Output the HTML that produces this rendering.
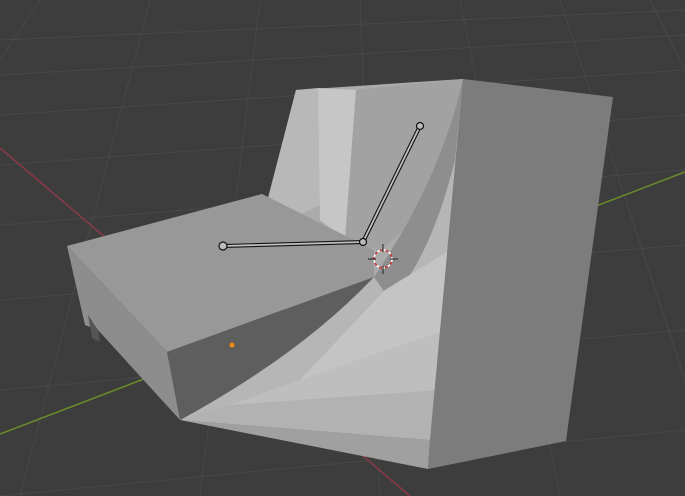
<!DOCTYPE html><html><head><style>html,body{margin:0;padding:0;background:#3d3d3d;overflow:hidden}svg{display:block}</style></head><body>
<svg width="685" height="496" viewBox="0 0 685 496" xmlns="http://www.w3.org/2000/svg">
<rect width="685" height="496" fill="#3d3d3d"/>
<g stroke="#484848" stroke-width="1" fill="none">
<path d="M0 40 L685 10 M0 75 L685 35 M0 115 L685 70 M0 165 L685 115 M0 225 L685 170 M0 300 L685 245 M0 390 L685 330 M0 496 L685 430"/>
<path d="M40 0 L0 60 M150 0 L20 496 M260 0 L200 496 M360 0 L380 496 M460 0 L560 496 M560 0 L685 380 M650 0 L685 70"/>
</g>
<line x1="0" y1="148" x2="410" y2="496" stroke="#8a3a46" stroke-width="1.5"/>
<line x1="0" y1="434" x2="685" y2="172" stroke="#6a8f2a" stroke-width="1.5"/>
<polygon points="296,90 463,79 430,440 300,400 267,202" fill="#ababab"/>
<polygon points="296,90 318,88 330,200 300,215 267,202" fill="#b8b8b8"/>
<polygon points="318,88 356,90 345,240 320,220" fill="#c6c6c6"/>
<polygon points="356,90 463,79 440,200 380,250 345,240" fill="#a2a2a2"/>
<path d="M374,277 Q440,180 463,79 L430,440 L180,420 Q290,360 374,277 Z" fill="#b6b6b6"/>
<path d="M374,277 Q440,180 463,79 L455,160 Q430,260 390,300 Z" fill="#8e8e8e"/>
<path d="M385,290 L450,250 L445,330 L300,380 Z" fill="#c4c4c4"/>
<path d="M300,380 L445,330 L440,390 L230,405 Z" fill="#bebebe"/>
<path d="M230,405 L440,390 L430,440 L180,420 Z" fill="#b2b2b2"/>
<polygon points="67,246 262,194 374,250 374,277 167,352" fill="#989898"/>
<path d="M167,352 L374,277 Q300,355 180,420 Z" fill="#5e5e5e"/>
<polygon points="67,246 167,352 180,420 98,330 85,325" fill="#8d8d8d"/>
<polygon points="88,315 98,330 100,342 92,338" fill="#555"/>
<polygon points="463,79 613,97 566,441 428,469 430,440" fill="#7c7c7c"/>
<polygon points="180,420 430,440 428,469" fill="#a0a0a0"/>
<g stroke="#111" stroke-width="4" fill="none" stroke-linecap="round"><path d="M223,246 L363,242 L420,126"/></g>
<g stroke="#c0c0c0" stroke-width="1.8" fill="none" stroke-linecap="round"><path d="M223,246 L363,242 L420,126"/></g>
<circle cx="223" cy="246" r="4" fill="#bbb" stroke="#111" stroke-width="1.2"/>
<circle cx="363" cy="242" r="3.5" fill="#bbb" stroke="#111" stroke-width="1.2"/>
<circle cx="420" cy="126" r="3.5" fill="#bbb" stroke="#111" stroke-width="1.2"/>
<circle cx="383" cy="259" r="9" fill="none" stroke="#fff" stroke-width="1.5" stroke-dasharray="3 3"/>
<circle cx="383" cy="259" r="9" fill="none" stroke="#d03030" stroke-width="1.5" stroke-dasharray="3 3" stroke-dashoffset="3"/>
<path d="M383,244 V252 M383,266 V274 M368,259 H376 M390,259 H398" stroke="#222" stroke-width="1"/>
<circle cx="232" cy="345" r="2.5" fill="#f08a10"/>
</svg>
</body></html>
